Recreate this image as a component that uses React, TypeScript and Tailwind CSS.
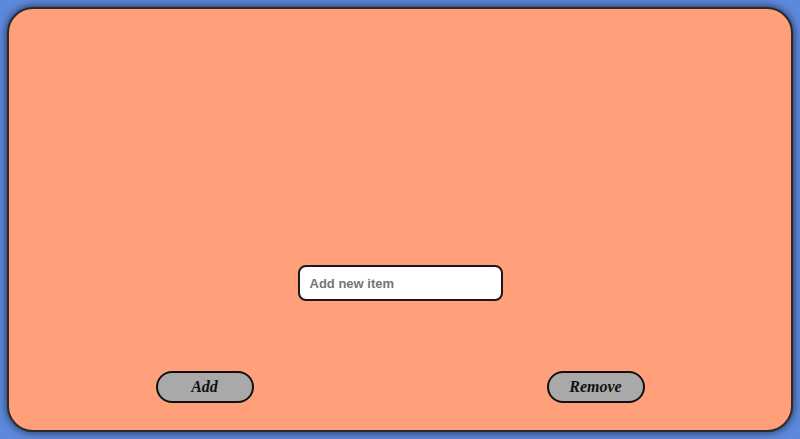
import React, { useState } from "react";

const App = () => {
  const [value, setValue] = useState("");

  return (
    <div className="h-[439px] w-[800px] bg-[#5d88db] p-[7px]">
      <div className="flex h-full w-full flex-col items-center justify-end rounded-[26px] border-2 border-[#2b2b2b] bg-[#ffa07a] pb-[27px] shadow-[0_0_8px_rgba(0,0,0,0.7)]">
        <input
          className="h-9 w-[205px] rounded-lg border-2 border-[#1a1a1a] bg-white px-2.5 font-['Liberation_Sans',Arial,sans-serif] text-[13px] font-bold text-[#333] placeholder-[#757575] outline-none"
          placeholder="Add new item"
          value={value}
          onChange={(e) => setValue(e.currentTarget.value)}
        />
        <div className="mt-[70px] flex w-full justify-around">
          <button className="h-8 w-[98px] rounded-full border-2 border-[#111] bg-[#a9a9a9] font-['Liberation_Serif','Times_New_Roman',serif] text-[16px] font-bold italic text-[#111]">
            Add
          </button>
          <button className="h-8 w-[98px] rounded-full border-2 border-[#111] bg-[#a9a9a9] font-['Liberation_Serif','Times_New_Roman',serif] text-[16px] font-bold italic text-[#111]">
            Remove
          </button>
        </div>
      </div>
    </div>
  );
};

export default App;
